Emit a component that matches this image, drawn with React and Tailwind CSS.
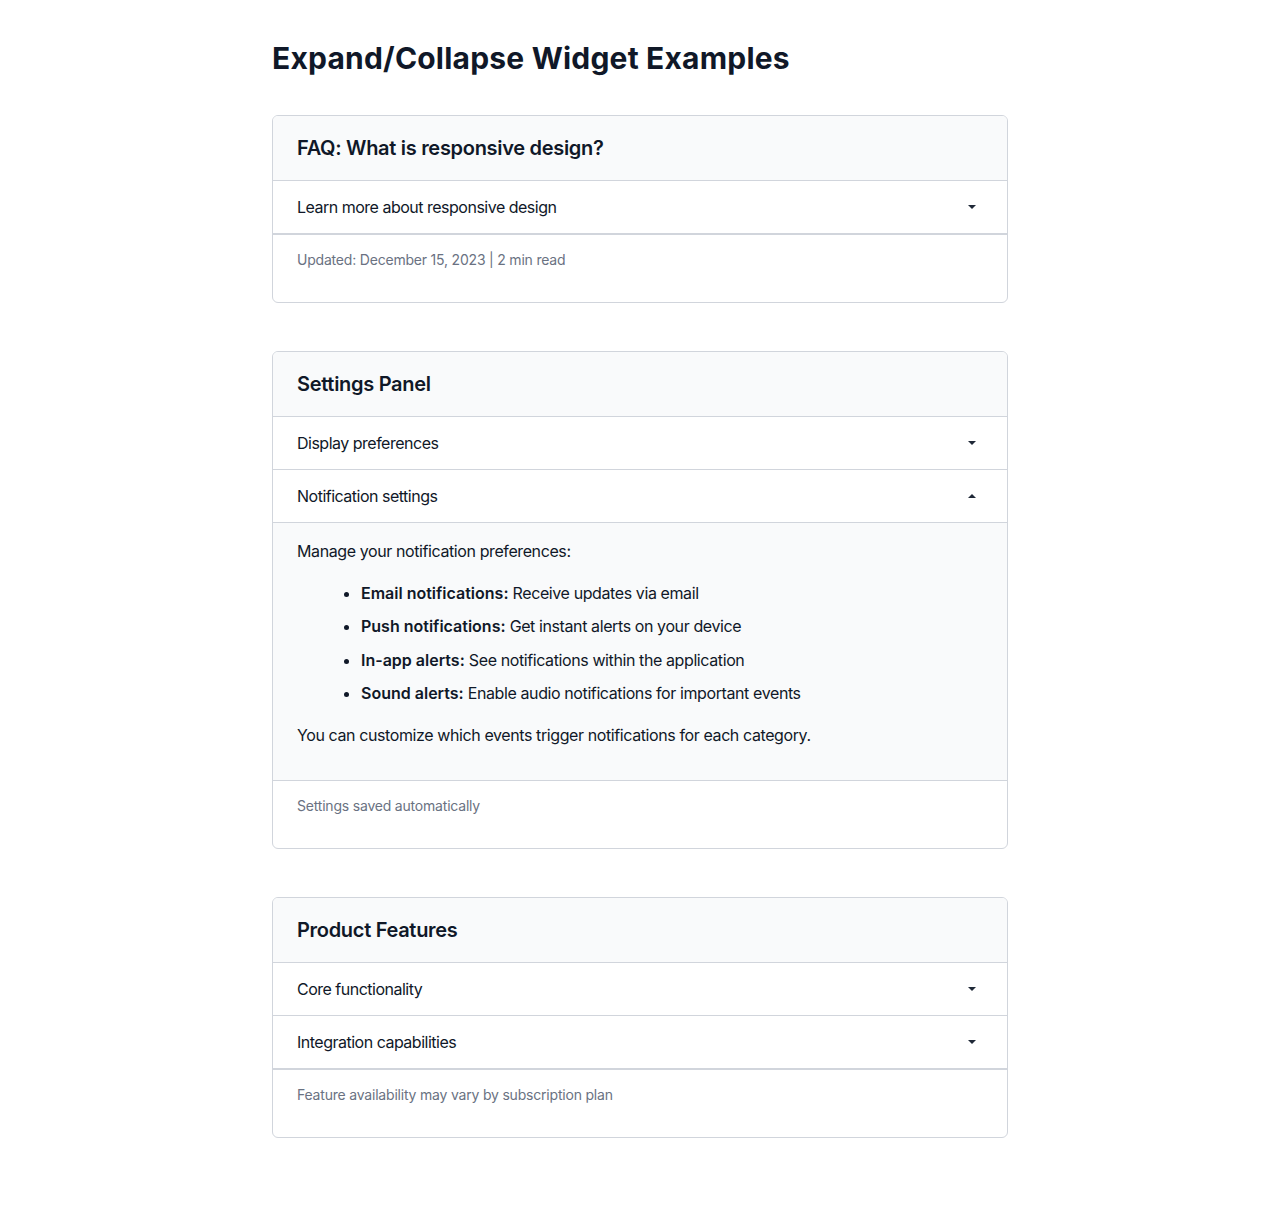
import React, { useState } from 'react';

const Caret = ({ open }) => (
  <svg width="10" height="6" viewBox="0 0 10 6" className={open ? 'rotate-180' : ''}>
    <path d="M1 1h8L5 5z" fill="#1f2937" />
  </svg>
);

const Row = ({ label, open, onToggle, children, last }) => (
  <div>
    <button
      type="button"
      onClick={onToggle}
      className={`w-full flex items-center justify-between px-6 py-[14px] text-left text-base leading-6 tracking-[-0.5px] text-gray-900 bg-white ${last && !open ? 'border-b-2' : 'border-b'} border-gray-300`}
    >
      <span>{label}</span>
      <span className="pr-[6px]">
        <Caret open={open} />
      </span>
    </button>
    {open && (
      <div className="bg-gray-50 px-6 pt-4 pb-[15px] border-b border-gray-300">{children}</div>
    )}
  </div>
);

const Card = ({ title, footer, items }) => {
  const [openIds, setOpenIds] = useState(items.filter((i) => i.open).map((i) => i.label));
  const toggle = (label) =>
    setOpenIds((ids) => (ids.includes(label) ? ids.filter((x) => x !== label) : [...ids, label]));

  return (
    <section className="mb-12 border border-gray-300 rounded-md overflow-hidden bg-white">
      <div className="bg-gray-50 px-6 py-[18px] border-b border-gray-300">
        <h2 className="text-xl leading-7 font-semibold tracking-[-0.3px] text-gray-900">{title}</h2>
      </div>
      {items.map((item, idx) => (
        <Row
          key={item.label}
          label={item.label}
          open={openIds.includes(item.label)}
          onToggle={() => toggle(item.label)}
          last={idx === items.length - 1}
        >
          {item.content}
        </Row>
      ))}
      <div className="px-6 pt-[14px] pb-[31px]">
        <p className="text-sm leading-[22px] tracking-[-0.2px] text-gray-500">{footer}</p>
      </div>
    </section>
  );
};

const notificationContent = (
  <div className="text-base leading-[1.6] tracking-[-0.4px] text-gray-900">
    <p className="mb-4">Manage your notification preferences:</p>
    <ul className="list-disc pl-16 mb-4 space-y-2">
      <li><strong className="font-semibold tracking-normal">Email notifications:</strong> Receive updates via email</li>
      <li><strong className="font-semibold tracking-normal">Push notifications:</strong> Get instant alerts on your device</li>
      <li><strong className="font-semibold tracking-normal">In-app alerts:</strong> See notifications within the application</li>
      <li><strong className="font-semibold tracking-normal">Sound alerts:</strong> Enable audio notifications for important events</li>
    </ul>
    <p className="mb-4">You can customize which events trigger notifications for each category.</p>
  </div>
);

export default function App() {
  return (
    <div className="min-h-screen bg-white" style={{ fontFamily: 'Inter, "Noto Sans", sans-serif' }}>
      <div className="max-w-3xl mx-auto px-4 pt-10 pb-16">
        <h1 className="text-3xl leading-9 font-bold tracking-[0.2px] text-gray-900 mb-[39px]">Expand/Collapse Widget Examples</h1>

        <Card
          title="FAQ: What is responsive design?"
          footer="Updated: December 15, 2023 | 2 min read"
          items={[{ label: 'Learn more about responsive design' }]}
        />

        <Card
          title="Settings Panel"
          footer="Settings saved automatically"
          items={[
            { label: 'Display preferences' },
            { label: 'Notification settings', open: true, content: notificationContent },
          ]}
        />

        <Card
          title="Product Features"
          footer="Feature availability may vary by subscription plan"
          items={[{ label: 'Core functionality' }, { label: 'Integration capabilities' }]}
        />
      </div>
    </div>
  );
}
